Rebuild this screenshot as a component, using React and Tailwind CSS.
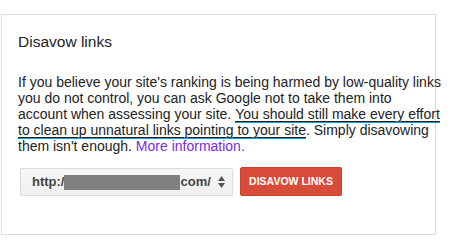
function Hi({ children }) {
  return (
    <span className="inline-block border-b-2 border-[#1a9cd8] leading-[13px] underline decoration-[#222] underline-offset-[2px]">
      {children}
    </span>
  );
}

export default function App() {
  return (
    <div className="w-[465px] h-[247px] bg-white pt-[14px] pl-px" style={{ fontFamily: '"Liberation Sans", Arial, sans-serif' }}>
      <div className="w-[435px] h-[221px] border border-[#dcdcdc] px-4 pt-[17px]">
        <h2 className="text-[15.5px] leading-[20px] text-[#222] font-normal">Disavow links</h2>
        <div className="mt-[22px] text-[14px] leading-[16px] text-[#222] whitespace-nowrap">
          <div>If you believe your site's ranking is being harmed by low-quality links</div>
          <div>you do not control, you can ask Google not to take them into</div>
          <div className="h-[16px]">account when assessing your site. <Hi>You should still make every effort</Hi></div>
          <div className="h-[16px]"><Hi>to clean up unnatural links pointing to your site</Hi>. Simply disavowing</div>
          <div>them isn't enough. <span className="text-[#7b2bd9]">More information.</span></div>
        </div>
        <div className="mt-[14px] flex items-center gap-[7px]">
          <div className="ml-[2px] w-[213px] h-[28px] border border-[#dcdcdc] rounded-[2px] bg-gradient-to-b from-[#f6f6f6] to-[#f0f0f0] flex items-center pl-[11px] pr-[6px]">
            <span className="text-[13px] font-bold text-[#444]">http:/</span>
            <span className="w-[116px] h-[15px] bg-[#808080]"></span>
            <span className="text-[13px] font-bold text-[#444]">com/</span>
            <span className="ml-auto flex flex-col items-center gap-[2px] mr-[1px]">
              <svg width="7" height="5" viewBox="0 0 7 5"><path d="M3.5 0L7 5H0z" fill="#555" /></svg>
              <svg width="7" height="5" viewBox="0 0 7 5"><path d="M0 0h7L3.5 5z" fill="#555" /></svg>
            </span>
          </div>
          <button className="h-[29px] w-[102px] rounded-[2px] bg-[#d84b38] border border-[#c94130] text-white text-[10.5px] font-bold whitespace-nowrap flex items-center justify-center -mt-px">
            DISAVOW LINKS
          </button>
        </div>
      </div>
    </div>
  );
}
